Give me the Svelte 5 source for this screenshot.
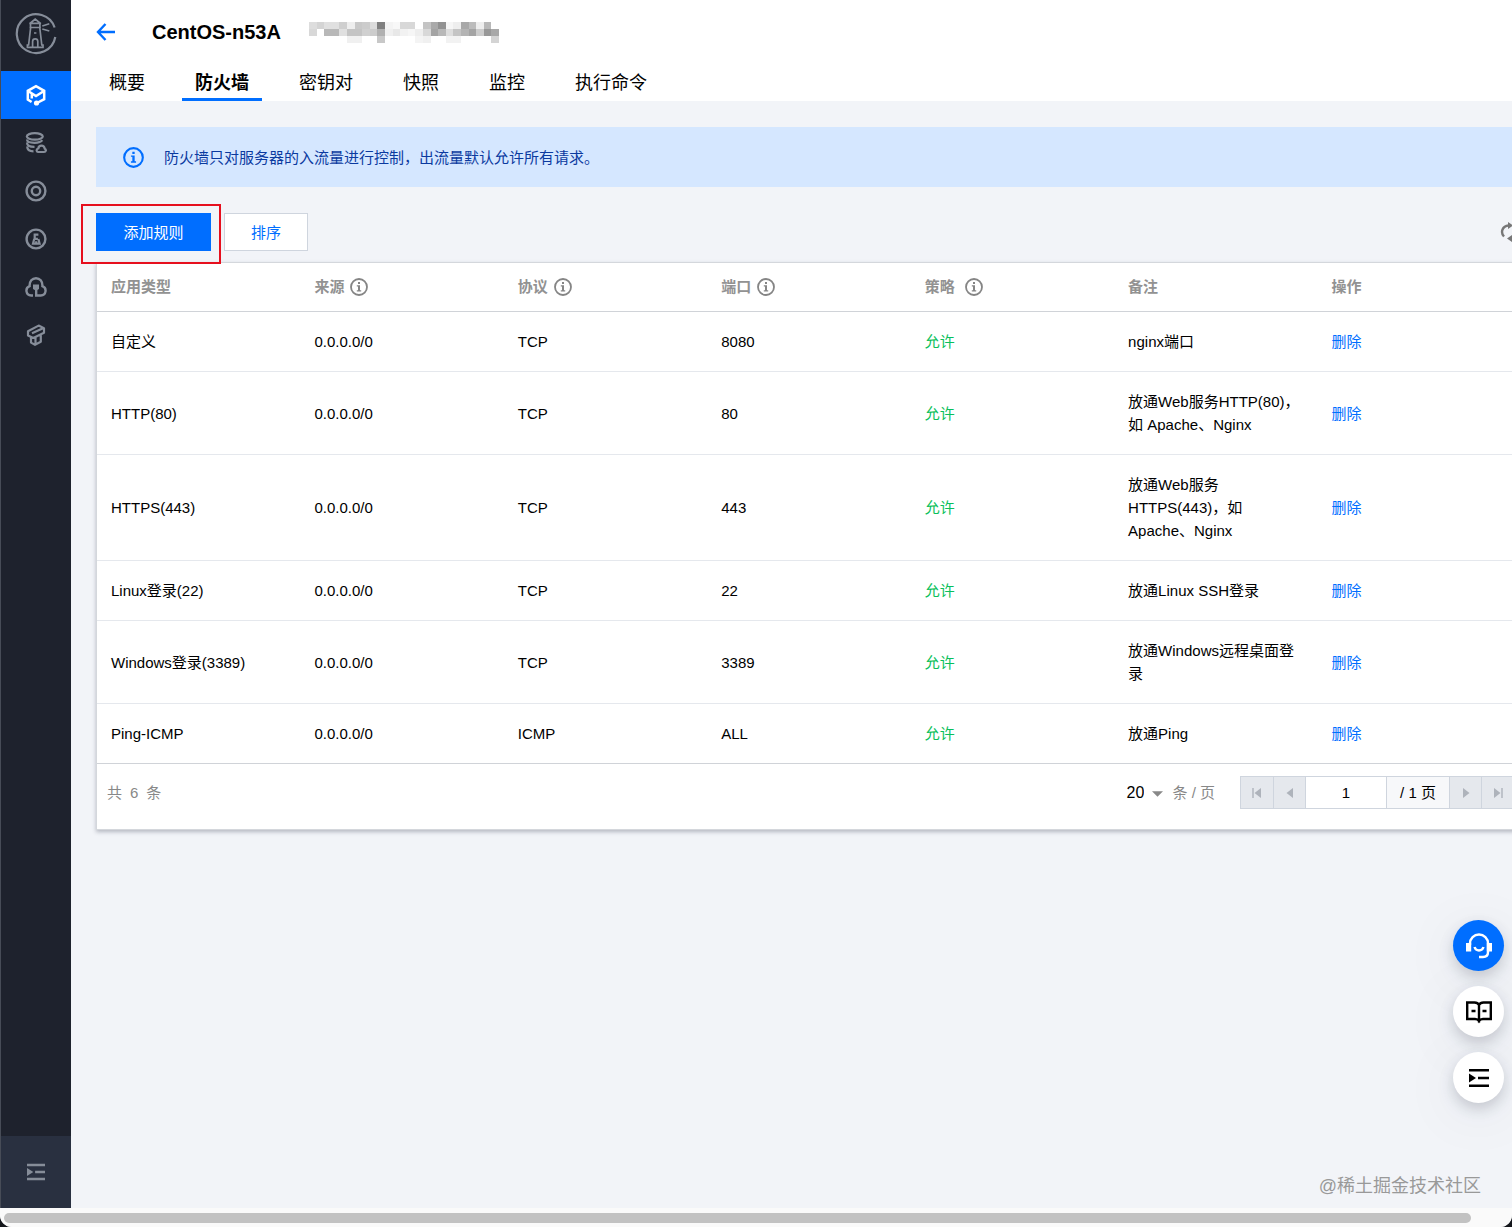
<script>
    const tabs = ['概要', '防火墙', '密钥对', '快照', '监控', '执行命令'];
    let selectedTab = $state('防火墙');
    let page = $state('1');
    let pageSize = $state('20');

    const columns = [
        { title: '应用类型' },
        { title: '来源', info: true },
        { title: '协议', info: true },
        { title: '端口', info: true },
        { title: '策略', info: true, wide: true },
        { title: '备注' },
        { title: '操作' }
    ];

    const rules = [
        { app: '自定义', source: '0.0.0.0/0', protocol: 'TCP', port: '8080', remark: 'nginx端口' },
        { app: 'HTTP(80)', source: '0.0.0.0/0', protocol: 'TCP', port: '80', remark: '放通Web服务HTTP(80)，如 Apache、Nginx' },
        { app: 'HTTPS(443)', source: '0.0.0.0/0', protocol: 'TCP', port: '443', remark: '放通Web服务HTTPS(443)，如 Apache、Nginx' },
        { app: 'Linux登录(22)', source: '0.0.0.0/0', protocol: 'TCP', port: '22', remark: '放通Linux SSH登录' },
        { app: 'Windows登录(3389)', source: '0.0.0.0/0', protocol: 'TCP', port: '3389', remark: '放通Windows远程桌面登录' },
        { app: 'Ping-ICMP', source: '0.0.0.0/0', protocol: 'ICMP', port: 'ALL', remark: '放通Ping' }
    ];

    // grey levels of the masked instance id, one byte per block
    const mask = [
        'ddd4e0e0cfeec8ccdc80f4f8d8d8ffc4aa92f6eea8bceeb8ff',
        'd8ffb8b8e0c4c4d0ccb0f0e8f2f6eed8a4b8ddc4b4a4cc98a8',
        'fffffffffff0f0ffffc8fffffffff4f0fffff2f2ffffffffd4'
    ].map(row => row.match(/../g).map(v => `#${v}${v}${v}`));
</script>

{#snippet infoIcon()}
    <svg class="info" viewBox="0 0 18 18" aria-hidden="true">
        <circle cx="9" cy="9" r="8" fill="none" stroke="currentColor" stroke-width="1.8"/>
        <path d="M8 4h2v2H8zM6.8 7.2H10v5h1.2v1.2H6.8v-1.2H8V8.4H6.8z" fill="currentColor"/>
    </svg>
{/snippet}

{#snippet menuIcon()}
    <svg viewBox="0 0 22 20" aria-hidden="true">
        <path d="M1 2.2h20M10 10h11M1 17.8h20" fill="none" stroke="currentColor" stroke-width="2.6"/>
        <path d="M1 5.5l7 4.5-7 4.5z" fill="currentColor"/>
    </svg>
{/snippet}

<div class="window">
    <div class="body">
        <aside class="sidebar">
            <a class="logo" href="#home" aria-label="首页">
                <svg viewBox="0 0 42 42" fill="none" stroke="currentColor">
                    <path d="M39.6 14.5A19.4 19.4 0 1 0 40.3 24" stroke-width="2.2"/>
                    <path d="M15.5 14v-4l4.7-4 4.7 4v4M14.3 10.3h11.8M14.5 14.5h11.4M15.6 15l-2 17h-1.2v2.4h15.6V32h-1.2l-2-17M17.6 34v-5.5a2.6 2.6 0 0 1 5.2 0V34M19 20h2.4" stroke-width="1.7"/>
                    <path d="M27.3 13l7-2.2M27.3 16l7 2" stroke-width="1.7"/>
                </svg>
            </a>
            <nav>
                <a class="side-item side-selected" href="#server" aria-label="服务器">
                    <svg viewBox="0 0 22 22" fill="none" stroke="currentColor" stroke-width="2.5">
                        <path d="M6.6 18L2.8 15.6V6.8L11 2.2l8.2 4.6v8.4L12 19M3 7l8 5 8-5M6.8 9.5v5"/>
                        <circle cx="11.5" cy="19" r="2.6" fill="currentColor" stroke="none"/>
                    </svg>
                </a>
                <a class="side-item" href="#database" aria-label="数据库">
                    <svg viewBox="0 0 22 22" fill="none" stroke="currentColor" stroke-width="2.2">
                        <ellipse cx="9.8" cy="4.4" rx="8" ry="3.2"/>
                        <path d="M2 7.500c0 2 3 3.300 7.500 3.300 3.800 0 6.800-1 7.800-2.600M2 10.500c0 2.800 2.500 4.400 7.500 4.400M2.200 14.500c0 3 2.300 4.800 6.300 4.800"/>
                        <path d="M13 20h6c2 0 2.600-2.400.8-3.300-.4-2-1.700-3-3.300-3-1.900 0-3 1.200-3.200 2.800-2.200.6-2.200 3.300-.3 3.500z"/>
                    </svg>
                </a>
                <a class="side-item" href="#disk" aria-label="云硬盘">
                    <svg viewBox="0 0 22 22" fill="none" stroke="currentColor" stroke-width="2.4">
                        <circle cx="11" cy="11" r="9.4"/>
                        <circle cx="11" cy="11" r="4.2"/>
                    </svg>
                </a>
                <a class="side-item" href="#image" aria-label="镜像">
                    <svg viewBox="0 0 22 22" fill="none" stroke="currentColor">
                        <circle cx="11" cy="11" r="9.4" stroke-width="2.4"/>
                        <path d="M13.4 6.6H9.7v4.2h3.2M9.2 11L8 15.6h6.6L13.4 11M11.2 15.5v-2.3" stroke-width="2.2"/>
                    </svg>
                </a>
                <a class="side-item" href="#key" aria-label="密钥">
                    <svg viewBox="0 0 22 22" fill="none" stroke="currentColor" stroke-width="2.4">
                        <path d="M8 19.5H6.2C.6 19.3-.2 12 4.6 10.2 4.3 5.2 7.2 2.2 11 2.2s6.7 3 6.4 8c4.8 1.8 4 9.1-1.6 9.3H11.2v-6"/>
                        <path d="M8 8.5h6v4.5l-3 1.8-3-1.8z" fill="currentColor" stroke="none"/>
                    </svg>
                </a>
                <a class="side-item" href="#template" aria-label="模板">
                    <svg viewBox="0 0 22 22" fill="none" stroke="currentColor" stroke-width="2.2" stroke-linejoin="round">
                        <path d="M3 7.2L13.6 1.6l5.4 2.6v4.6L8.3 14 3 11.4zM7 9.2l10.5-4.7M6 13v5.6l4 2.2 5.800-3V11M10.500 13.400v7"/>
                    </svg>
                </a>
            </nav>
            <button class="side-toggle" aria-label="展开菜单">{@render menuIcon()}</button>
        </aside>

        <main>
            <header>
                <div class="title-row">
                    <a class="back" href="#list" aria-label="返回">
                        <svg viewBox="0 0 20 20" fill="none" stroke="currentColor" stroke-width="2.4">
                            <path d="M9.5 2L2 10l7.5 8M2 10h17"/>
                        </svg>
                    </a>
                    <h1>CentOS-n53A</h1>
                    <svg class="mask" viewBox="0 0 200 24" preserveAspectRatio="none" shape-rendering="crispEdges" aria-hidden="true">
                        {#each mask as row, y}
                            {#each row as fill, x}
                                <rect x={x * 8} y={y * 8} width="8" height="8" {fill}/>
                            {/each}
                        {/each}
                    </svg>
                </div>
                <nav class="tabs">
                    {#each tabs as tab}
                        <button class="tab" class:tab-selected={tab == selectedTab} onclick={() => selectedTab = tab}>{tab}</button>
                    {/each}
                </nav>
            </header>

            <section class="content">
                <div class="notice">
                    {@render infoIcon()}
                    <span>防火墙只对服务器的入流量进行控制，出流量默认允许所有请求。</span>
                </div>

                <div class="toolbar">
                    <div class="marked">
                        <button class="btn btn-primary">添加规则</button>
                    </div>
                    <button class="btn">排序</button>
                    <button class="refresh" aria-label="刷新">
                        <svg viewBox="0 0 20 20" fill="none" stroke="currentColor" stroke-width="2.4">
                            <path d="M4 14.5C0 10 2.6 4 8.5 3.5M16 5.5c4 4.5 1.4 10.5-4.5 11"/>
                            <path d="M8 0l5 3.5L8 7zM12 13l-5 3.5 5 3.5z" fill="currentColor" stroke="none"/>
                        </svg>
                    </button>
                </div>

                <div class="card">
                    <table>
                        <thead>
                            <tr>
                                {#each columns as column}
                                    <th>
                                        <span class="head" class:head-wide={column.wide}>
                                            {column.title}
                                            {#if column.info}{@render infoIcon()}{/if}
                                        </span>
                                    </th>
                                {/each}
                            </tr>
                        </thead>
                        <tbody>
                            {#each rules as rule}
                                <tr>
                                    <td>{rule.app}</td>
                                    <td>{rule.source}</td>
                                    <td>{rule.protocol}</td>
                                    <td>{rule.port}</td>
                                    <td class="allow">允许</td>
                                    <td>{rule.remark}</td>
                                    <td><a href="#delete">删除</a></td>
                                </tr>
                            {/each}
                        </tbody>
                    </table>
                    <div class="card-foot">
                        <div class="total"><span>共</span><span>6</span><span>条</span></div>
                        <label class="size">
                            <select bind:value={pageSize}>
                                <option>10</option>
                                <option>20</option>
                                <option>50</option>
                            </select>
                            <svg viewBox="0 0 12 6" aria-hidden="true"><path d="M0 0h12L6 6z" fill="currentColor"/></svg>
                            <span>条 / 页</span>
                        </label>
                        <div class="pager">
                            <button aria-label="第一页" disabled>
                                <svg viewBox="0 0 10 12"><path d="M1 1v10" stroke="currentColor" stroke-width="1.4"/><path d="M9 1v10L2.5 6z" fill="currentColor"/></svg>
                            </button>
                            <button aria-label="上一页" disabled>
                                <svg viewBox="0 0 10 12"><path d="M8 1v10L1.5 6z" fill="currentColor"/></svg>
                            </button>
                            <input aria-label="页码" bind:value={page}/>
                            <span class="pages">/ 1 页</span>
                            <button aria-label="下一页" disabled>
                                <svg viewBox="0 0 10 12"><path d="M2 1v10l6.5-5z" fill="currentColor"/></svg>
                            </button>
                            <button aria-label="最后一页" disabled>
                                <svg viewBox="0 0 10 12"><path d="M9 1v10" stroke="currentColor" stroke-width="1.4"/><path d="M1 1v10l6.5-5z" fill="currentColor"/></svg>
                            </button>
                        </div>
                    </div>
                </div>
            </section>
        </main>
    </div>
    <div class="scrollbar"><div class="thumb"></div></div>

    <div class="floats">
        <button class="float float-primary" aria-label="在线客服">
            <svg viewBox="0 0 28 28" fill="none" stroke="currentColor" stroke-width="2.4">
                <path d="M5 13v-1.5a9 9 0 0 1 18 0V20c0 3.5-2 5-5 5h-4"/>
                <path d="M9.5 15c.8 2.5 2.5 3.5 4.5 3.5s3.7-1 4.5-3.5"/>
                <path d="M1 11h5.2v8.5H1zM21.8 11H27v8.5h-5.2z" fill="currentColor" stroke="none"/>
            </svg>
        </button>
        <button class="float" aria-label="文档">
            <svg viewBox="0 0 28 28" fill="none" stroke="currentColor" stroke-width="2.4">
                <path d="M14 7C13 5 11.5 4.5 9.5 4.5H2.2V21H10c2 0 3.2.6 4 2 .8-1.4 2-2 4-2h7.800V4.500h-7.300c-2 0-3.500.5-4.500 2.500zM14 6.500v18"/>
                <path d="M6.5 13h4M17.5 13h4"/>
            </svg>
        </button>
        <button class="float float-menu" aria-label="菜单">{@render menuIcon()}</button>
    </div>
    <div class="watermark">@稀土掘金技术社区</div>
</div>

<style>
    :global(body) {
        margin: 0;
        background: #15171c;
    }

    .window {
        --blue: #006eff;
        position: relative;
        display: flex;
        flex-direction: column;
        height: 100vh;
        overflow: hidden;
        border-radius: 0 0 12px 12px;
        background: #f2f4f8;
        color: #000;
        font: 15px/23px "Liberation Sans", "Noto Sans CJK SC", sans-serif;
    }

    button, input, select {
        font: inherit;
        color: inherit;
        margin: 0;
        padding: 0;
        border: 0;
        border-radius: 0;
        background: none;
    }

    button {
        cursor: pointer;
    }

    a {
        color: var(--blue);
        text-decoration: none;
    }

    svg {
        display: block;
        flex: none;
    }

    .body {
        flex: 1;
        display: flex;
        min-height: 0;
    }

    .sidebar {
        flex: none;
        box-sizing: border-box;
        width: 71px;
        display: flex;
        flex-direction: column;
        border-left: 1px solid #474c57;
        background: #1e222d;
        color: #868d99;
    }

    .logo {
        height: 71px;
        display: flex;
        align-items: center;
        justify-content: center;
        box-sizing: border-box;
        padding-bottom: 4px;
        color: #868d99;
    }

    .logo svg {
        width: 42px;
        height: 42px;
    }

    .side-item {
        height: 48px;
        display: flex;
        align-items: center;
        justify-content: center;
        color: #868d99;
    }

    .side-item svg {
        width: 22px;
        height: 22px;
    }

    .side-selected {
        background: var(--blue);
        color: #fff;
    }

    .side-toggle {
        height: 72px;
        margin-top: auto;
        display: flex;
        align-items: center;
        justify-content: center;
        background: #293040;
    }

    .side-toggle svg {
        width: 20px;
        height: 18px;
    }

    main {
        flex: 1;
        min-width: 0;
        overflow: hidden;
    }

    header {
        padding-left: 25px;
        background: #fff;
    }

    .title-row {
        height: 64px;
        display: flex;
        align-items: center;
    }

    .back svg {
        width: 20px;
        height: 20px;
    }

    h1 {
        margin: 0 28px 0 36px;
        font-size: 20px;
        line-height: 28px;
    }

    .mask {
        width: 190px;
        height: 21px;
    }

    .tabs {
        display: flex;
        gap: 24px;
        height: 37px;
    }

    .tab {
        box-sizing: border-box;
        padding: 0 13px;
        border-top: 3px solid transparent;
        border-bottom: 3px solid transparent;
        font-size: 18px;
        line-height: 30px;
    }

    .tab-selected {
        border-bottom-color: var(--blue);
        font-weight: bold;
    }

    /* the card runs past the right edge of the window */
    .content {
        margin-right: -10px;
        padding: 26px 0 0 25px;
    }

    .notice {
        display: flex;
        align-items: center;
        gap: 20px;
        height: 60px;
        padding-left: 27px;
        background: #d5e7ff;
        color: #0b3a9f;
    }

    .notice .info {
        width: 21px;
        height: 21px;
        color: var(--blue);
    }

    .toolbar {
        display: flex;
        align-items: center;
        gap: 13px;
        margin: 26px 0 11px;
    }

    .btn {
        box-sizing: border-box;
        height: 38px;
        padding: 0 26px;
        border: 1px solid #cfd5de;
        background: #fff;
        color: var(--blue);
    }

    .btn-primary {
        width: 115px;
        border-color: var(--blue);
        background: var(--blue);
        color: #fff;
    }

    .marked {
        position: relative;
    }

    .marked::after {
        content: '';
        position: absolute;
        inset: -9px -10px -13px -15px;
        border: 2px solid #e60f1e;
        z-index: 1;
        pointer-events: none;
    }

    .refresh {
        margin-left: auto;
        padding-right: 2px;
        color: #777;
    }

    .refresh svg {
        width: 20px;
        height: 20px;
    }

    .card {
        border: 1px solid #d4d7dc;
        background: #fff;
        box-shadow: 0 2px 4px rgba(54, 58, 80, .32);
    }

    table {
        width: 100%;
        table-layout: fixed;
        border-collapse: collapse;
    }

    th, td {
        padding: 18px 14px;
        border-bottom: 1px solid #e5e8ed;
        text-align: left;
        font-weight: normal;
    }

    th {
        padding: 12px 14px 13px;
        border-bottom-color: #d0d3d8;
        color: #929292;
        font-weight: bold;
    }

    tbody tr:last-child td {
        border-bottom-color: #d0d3d8;
    }

    .head {
        display: flex;
        align-items: center;
        gap: 6px;
    }

    .head-wide {
        gap: 10px;
    }

    .head .info {
        width: 18px;
        height: 18px;
        color: #858585;
    }

    .allow {
        color: #0abf5b;
    }

    .card-foot {
        display: flex;
        align-items: center;
        padding: 12px 7px 20px 10px;
    }

    .total {
        display: flex;
        gap: 8px;
        margin-right: auto;
        color: #888;
    }

    .size {
        display: flex;
        align-items: center;
        color: #888;
        margin-right: 25px;
    }

    .size select {
        appearance: none;
        width: 18px;
        font-size: 16px;
        color: #000;
    }

    .size svg {
        width: 11px;
        height: 6px;
        margin: 3px 9px 0 8px;
    }

    .pager {
        display: flex;
        border: 1px solid #cfd5de;
    }

    .pager > * + * {
        border-left: 1px solid #cfd5de;
    }

    .pager button {
        width: 32px;
        height: 31px;
        display: flex;
        align-items: center;
        justify-content: center;
        background: #e5e8ed;
        color: #aeb3bb;
    }

    .pager svg {
        width: 10px;
        height: 12px;
    }

    .pager input {
        width: 80px;
        text-align: center;
    }

    .pages {
        width: 62px;
        background: #f7f8fa;
        line-height: 31px;
        text-align: center;
    }

    .scrollbar {
        height: 10px;
        padding: 5px 41px 4px 4px;
        background: #fafafa;
    }

    .thumb {
        height: 10px;
        border-radius: 5px;
        background: #c2c2c2;
    }

    .floats {
        position: absolute;
        right: 8px;
        bottom: 124px;
        display: flex;
        flex-direction: column;
        gap: 15px;
    }

    .float {
        width: 51px;
        height: 51px;
        display: flex;
        align-items: center;
        justify-content: center;
        border-radius: 50%;
        background: #fff;
        box-shadow: 0 6px 14px rgba(54, 58, 80, .22), 0 10px 60px rgba(54, 58, 80, .08);
    }

    .float svg {
        width: 28px;
        height: 28px;
    }

    .float-menu svg {
        width: 22px;
        height: 20px;
    }

    .float-primary {
        background: var(--blue);
        color: #fff;
    }

    .watermark {
        position: absolute;
        right: 31px;
        bottom: 29px;
        color: #999;
        font-size: 18px;
        line-height: 24px;
    }
</style>
